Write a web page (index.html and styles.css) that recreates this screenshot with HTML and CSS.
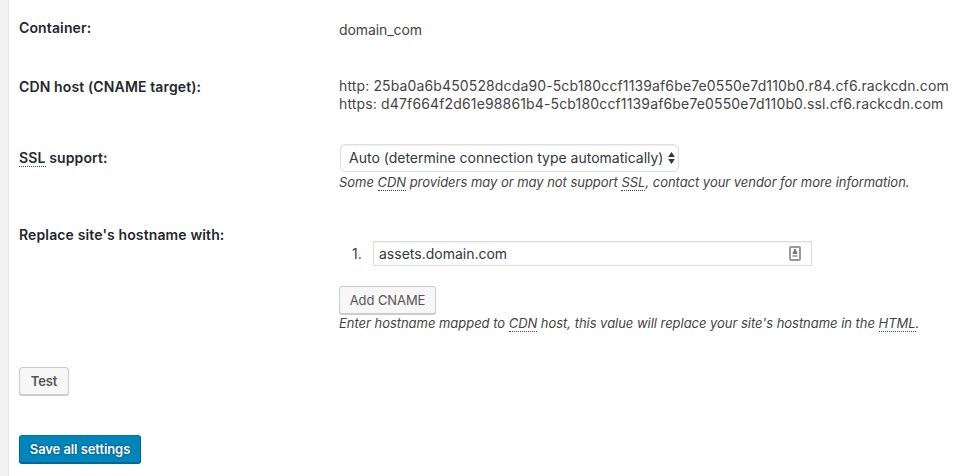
FILE: index.html
```html
<!DOCTYPE html>
<html lang="en">
<head>
<meta charset="utf-8">
<title>CDN settings</title>
<link rel="stylesheet" href="styles.css">
</head>
<body>
<form class="panel">
  <div class="row row-container">
    <div class="label">Container:</div>
    <div class="field value"><span class="t-domain">domain_com</span></div>
  </div>
  <div class="row row-host">
    <div class="label">CDN host (CNAME target):</div>
    <div class="field value"><span class="t-http">http: 25ba0a6b450528dcda90-5cb180ccf1139af6be7e0550e7d110b0.r84.cf6.rackcdn.com</span><br><span class="t-https">https: d47f664f2d61e98861b4-5cb180ccf1139af6be7e0550e7d110b0.ssl.cf6.rackcdn.com</span></div>
  </div>
  <div class="row row-ssl">
    <div class="label"><abbr>SSL</abbr> support:</div>
    <div class="field">
      <div class="select"><span>Auto (determine connection type automatically)</span><svg class="arrows" viewBox="0 0 7 12"><path d="M0.2 5 3.5 0 6.8 5zM0.2 7h6.6L3.5 12z"/></svg></div>
      <p class="hint">Some <abbr>CDN</abbr> providers may or may not support <abbr>SSL</abbr>, contact your vendor for more information.</p>
    </div>
  </div>
  <div class="row row-cname">
    <div class="label">Replace site's hostname with:</div>
    <div class="field">
      <div class="cname"><span class="number">1.</span><div class="input"><span>assets.domain.com</span><svg class="card" viewBox="0 0 12 15"><rect x="1" y="1" width="10" height="13" rx="1" fill="#fff" stroke="#999" stroke-width="2"/><path fill="#777" d="M5 3h2v1.500l1.300 2V8H3.700V6.500L5 4.500z"/><path fill="#aaa" d="M3.500 9h5v2h-5z"/></svg></div></div>
      <button type="button" class="button add">Add CNAME</button>
      <p class="hint">Enter hostname mapped to <abbr>CDN</abbr> host, this value will replace your site's hostname in the <abbr>HTML</abbr>.</p>
    </div>
  </div>
  <button type="button" class="button test">Test</button>
  <button type="button" class="button save">Save all settings</button>
</form>
</body>
</html>
```
FILE: styles.css
```css
* { box-sizing: border-box; }
body {
  margin: 0;
  background: #f1f1f1;
  color: #444;
  font: 14px/18px Inter, "Liberation Sans", sans-serif;
  overflow: hidden;
}
.panel {
  height: 476px;
  margin-left: 8px;
  padding-left: 10px;
  border-left: 1px solid #e5e5e5;
  background: #fff;
  display: flex;
  flex-direction: column;
  align-items: flex-start;
  white-space: nowrap;
}
.row { display: grid; grid-template-columns: 320px 1fr; width: 100%; flex: none; }
.row-container { height: 77px; padding-top: 19px; }
.row-host { height: 67px; }
.row-ssl { height: 82px; }
.row-cname { height: 141px; }
.label { color: #23282d; font-weight: 600; letter-spacing: .13px; }
.row-container .value { padding-top: 2px; }
.row-host .label { padding-top: 1px; }
.row-ssl .label { padding-top: 5px; }
.t-domain { letter-spacing: -.08px; }
.t-http { letter-spacing: .128px; }
.t-https { letter-spacing: .148px; }
abbr { border-bottom: 1px dotted #444; }
.select {
  width: 339px;
  height: 28px;
  margin-left: 1px;
  border: 1px solid #ddd;
  border-radius: 5px;
  box-shadow: inset 0 1px 2px rgba(0,0,0,.07);
  color: #32373c;
  padding: 0 3px 0 8px;
  display: flex;
  align-items: center;
  justify-content: space-between;
}
.arrows { width: 7px; height: 12px; fill: #32373c; }
.hint {
  margin: 0;
  font-size: 13px;
  font-style: italic;
  line-height: 18px;
  letter-spacing: -.033px;
}
.row-ssl .hint { margin-top: 1px; }
.cname { display: flex; align-items: center; height: 25px; margin-top: 15px; }
.number { width: 34px; padding-left: 13px; }
.input {
  width: 439px;
  height: 25px;
  border: 1px solid #ddd;
  box-shadow: inset 0 1px 2px rgba(0,0,0,.07);
  color: #32373c;
  padding: 0 10px 0 5px;
  display: flex;
  align-items: center;
  justify-content: space-between;
}
.card { width: 12px; height: 15px; }
.button {
  height: 28px;
  padding: 0;
  border: 1px solid #ccc;
  border-radius: 3px;
  background: #f7f7f7;
  box-shadow: 0 1px 0 #ccc;
  color: #555;
  font: 13px/26px Inter, "Liberation Sans", sans-serif;
  letter-spacing: -.08px;
}
.add { display: block; width: 97px; margin: 20px 0 0; }
.test { width: 50px; font-weight: 600; }
.save {
  width: 122px;
  margin-top: 40px;
  border-color: #0073aa #006799 #006799;
  background: #0085ba;
  box-shadow: 0 1px 0 #006799;
  color: #fff;
  font-weight: 600;
  text-shadow: 0 -1px 1px #006799, 1px 0 1px #006799, 0 1px 1px #006799, -1px 0 1px #006799;
}
```
